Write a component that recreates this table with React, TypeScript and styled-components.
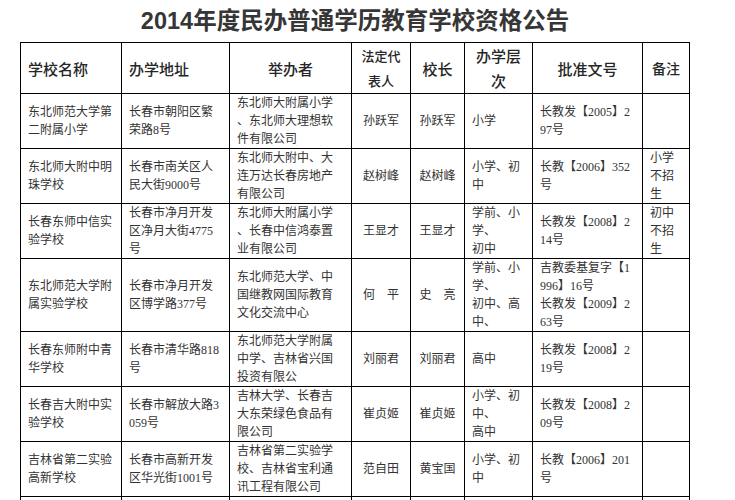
import React from 'react'
import styled, { createGlobalStyle } from 'styled-components'

type Align = 'left' | 'center'

interface Column {
  width: number
  align: Align
  head: string[]
  headSize?: number
  headAlign?: Align
}

const columns: Column[] = [
  { width: 101, align: 'left', head: ['学校名称'], headAlign: 'left' },
  { width: 108, align: 'left', head: ['办学地址'], headAlign: 'left' },
  { width: 122, align: 'left', head: ['举办者'] },
  { width: 59, align: 'center', head: ['法定代', '表人'], headSize: 13 },
  { width: 54, align: 'center', head: ['校长'] },
  { width: 68, align: 'left', head: ['办学层', '次'] },
  { width: 110, align: 'left', head: ['批准文号'] },
  { width: 47, align: 'left', head: ['备注'], headSize: 14 },
]

// each cell is a list of lines, wrapped the way the original page wraps them
const rows: string[][][] = [
  [
    ['东北师范大学第', '二附属小学'],
    ['长春市朝阳区繁', '荣路8号'],
    ['东北师大附属小学', '、东北师大理想软', '件有限公司'],
    ['孙跃军'],
    ['孙跃军'],
    ['小学'],
    ['长教发【2005】2', '97号'],
    [],
  ],
  [
    ['东北师大附中明', '珠学校'],
    ['长春市南关区人', '民大街9000号'],
    ['东北师大附中、大', '连万达长春房地产', '有限公司'],
    ['赵树峰'],
    ['赵树峰'],
    ['小学、初', '中'],
    ['长教【2006】352', '号'],
    ['小学', '不招', '生'],
  ],
  [
    ['长春东师中信实', '验学校'],
    ['长春市净月开发', '区净月大街4775', '号'],
    ['东北师大附属小学', '、长春中信鸿泰置', '业有限公司'],
    ['王显才'],
    ['王显才'],
    ['学前、小', '学、', '初中'],
    ['长教发【2008】2', '14号'],
    ['初中', '不招', '生'],
  ],
  [
    ['东北师范大学附', '属实验学校'],
    ['长春市净月开发', '区博学路377号'],
    ['东北师范大学、中', '国继教网国际教育', '文化交流中心'],
    ['何　平'],
    ['史　亮'],
    ['学前、小', '学、', '初中、高', '中、'],
    ['吉教委基复字【1', '996】16号', '长教发【2009】2', '63号'],
    [],
  ],
  [
    ['长春东师附中青', '华学校'],
    ['长春市清华路818', '号'],
    ['东北师范大学附属', '中学、吉林省兴国', '投资有限公'],
    ['刘丽君'],
    ['刘丽君'],
    ['高中'],
    ['长教发【2008】2', '19号'],
    [],
  ],
  [
    ['长春吉大附中实', '验学校'],
    ['长春市解放大路3', '059号'],
    ['吉林大学、长春吉', '大东荣绿色食品有', '限公司'],
    ['崔贞姬'],
    ['崔贞姬'],
    ['小学、初', '中、', '高中'],
    ['长教发【2008】2', '09号'],
    [],
  ],
  [
    ['吉林省第二实验', '高新学校'],
    ['长春市高新开发', '区华光街1001号'],
    ['吉林省第二实验学', '校、吉林省宝利通', '讯工程有限公司'],
    ['范自田'],
    ['黄宝国'],
    ['小学、初', '中'],
    ['长教【2006】201', '号'],
    [],
  ],
  // next row begins at the bottom edge; only its top border is in view
  [[], [], [], [], [], [], [], []],
]

const GlobalStyle = createGlobalStyle`
  html, body {
    margin: 0;
    padding: 0;
    background: #ffffff;
  }
`

const Page = styled.div`
  padding-left: 20px;
  width: 670px;
`

const Title = styled.h1`
  margin: 0;
  height: 42px;
  line-height: 42px;
  text-align: center;
  font-family: 'Liberation Sans', 'Noto Sans CJK SC', sans-serif;
  font-size: 23.5px;
  font-weight: 700;
  color: #363636;
`

const Table = styled.table`
  width: 669px;
  table-layout: fixed;
  border-collapse: collapse;
  border: 1px solid #000;
`

const HeadCell = styled.th<{ $align: Align; $size: number }>`
  height: 50px;
  padding: 0 7px;
  border: 1px solid #000;
  text-align: ${(p) => p.$align};
  vertical-align: middle;
  font-family: 'Noto Sans CJK SC', sans-serif;
  font-size: ${(p) => p.$size}px;
  font-weight: 500;
  line-height: 25px;
  color: #262626;
`

const Cell = styled.td<{ $align: Align }>`
  padding: 0 7px;
  border: 1px solid #000;
  text-align: ${(p) => p.$align};
  vertical-align: middle;
  font-family: 'Liberation Serif', 'Noto Sans CJK SC', serif;
  font-size: 12px;
  line-height: 18px;
  color: #333;
  white-space: nowrap;
  overflow: hidden;
`

const Line = styled.div`
  height: 18px;
`

const EmptyCell = styled.div`
  height: 54px;
`

export default function App() {
  return (
    <>
      <GlobalStyle />
      <Page>
        <Title>2014年度民办普通学历教育学校资格公告</Title>
        <Table>
          <colgroup>
            {columns.map((c, i) => (
              <col key={i} style={{ width: c.width }} />
            ))}
          </colgroup>
          <thead>
            <tr>
              {columns.map((c, i) => (
                <HeadCell key={i} $align={c.headAlign ?? 'center'} $size={c.headSize ?? 15}>
                  {c.head.map((l, j) => (
                    <div key={j}>{l}</div>
                  ))}
                </HeadCell>
              ))}
            </tr>
          </thead>
          <tbody>
            {rows.map((row, r) => (
              <tr key={r}>
                {row.map((cell, i) => (
                  <Cell key={i} $align={columns[i].align}>
                    {cell.length === 0 ? (
                      <EmptyCell />
                    ) : (
                      cell.map((l, j) => <Line key={j}>{l}</Line>)
                    )}
                  </Cell>
                ))}
              </tr>
            ))}
          </tbody>
        </Table>
      </Page>
    </>
  )
}
